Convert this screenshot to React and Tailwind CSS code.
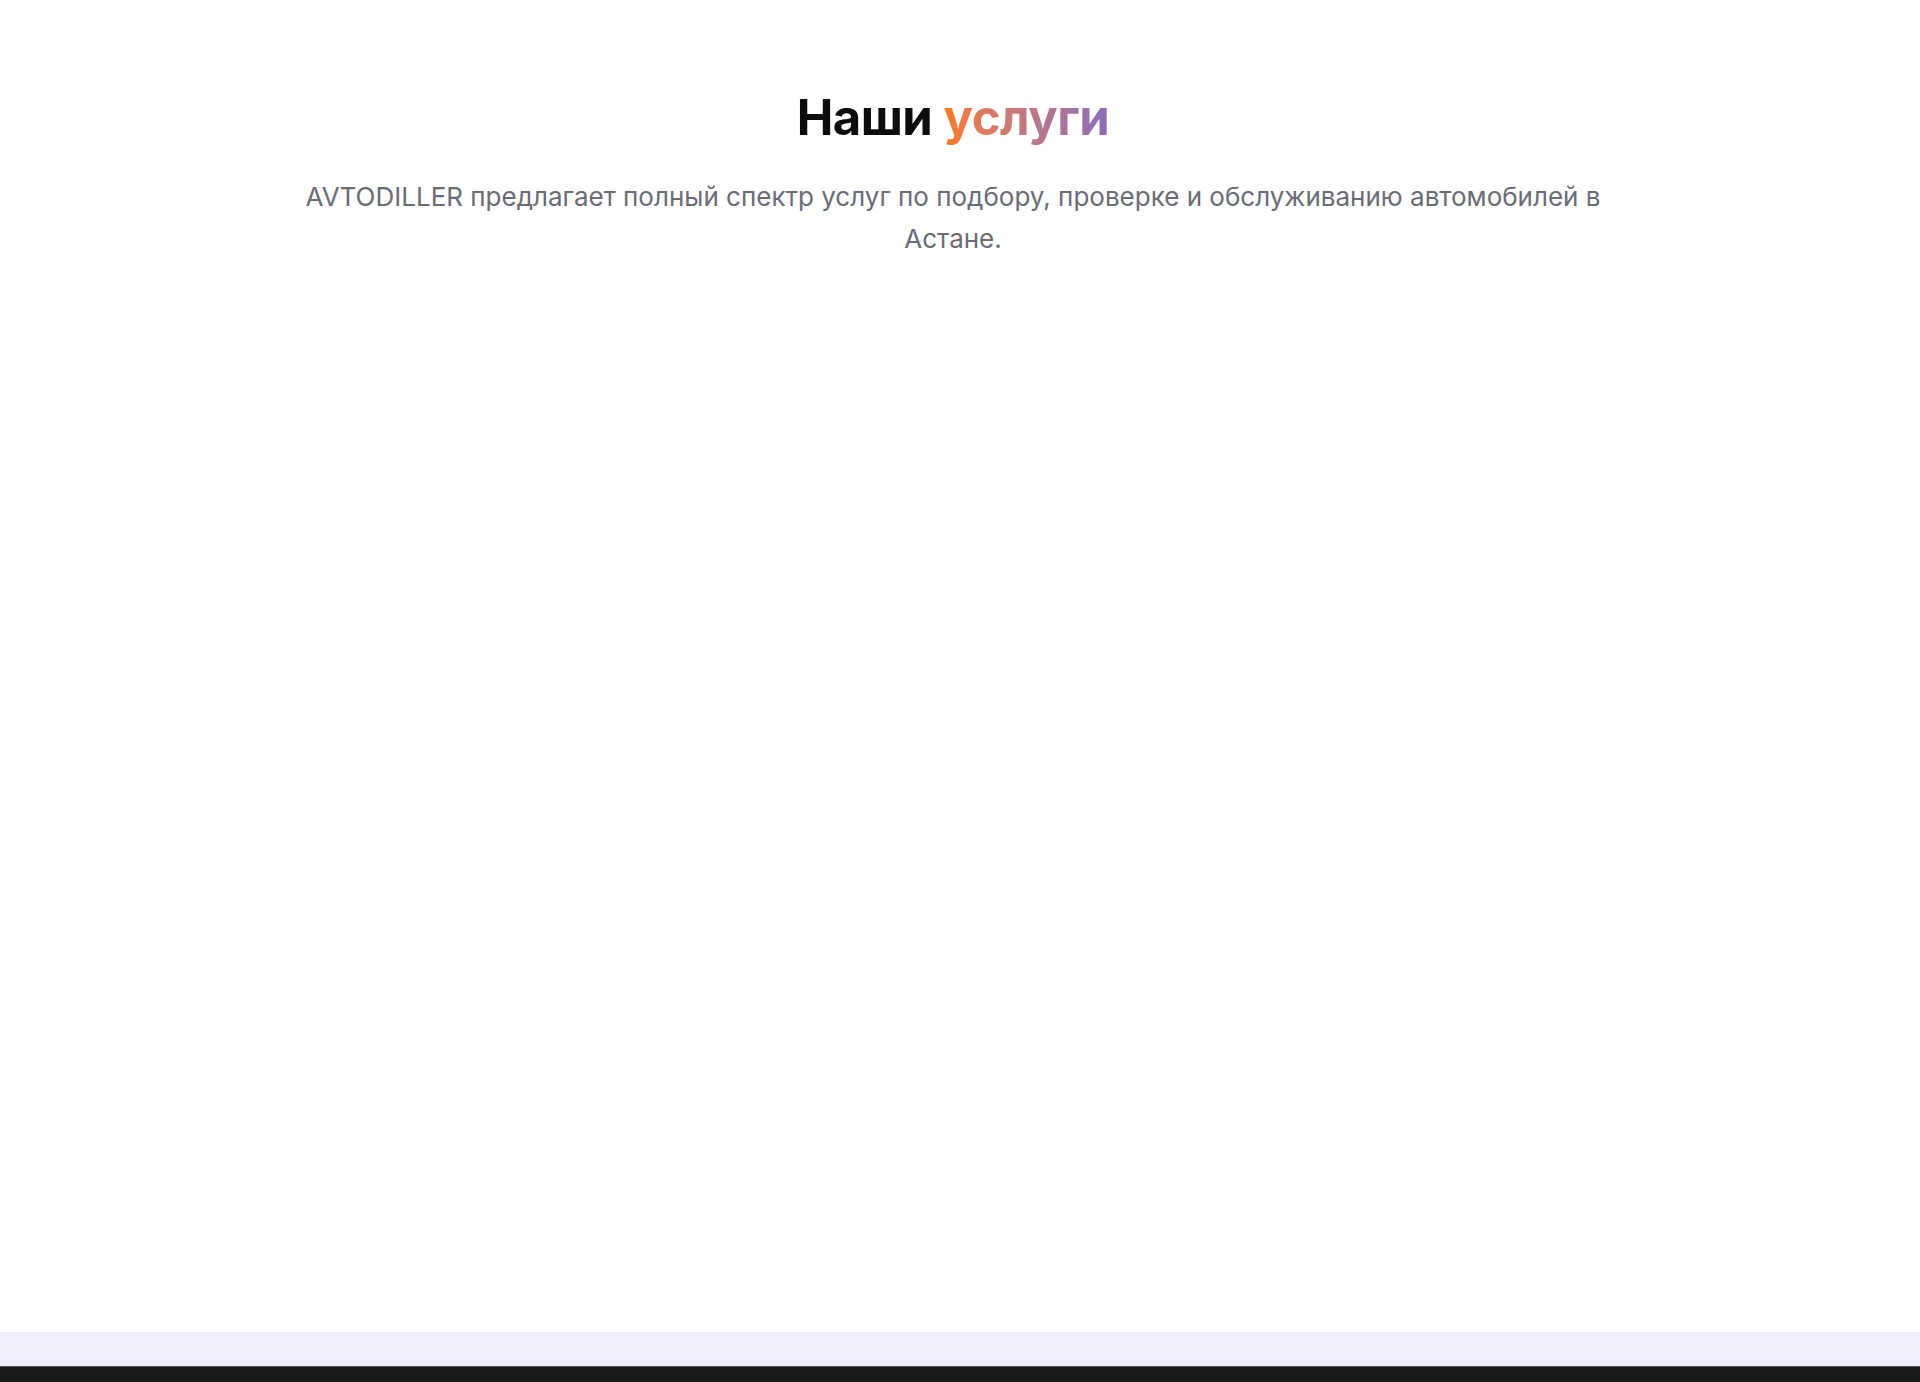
export default function App() {
  return (
    <div className="min-h-[1382px] flex flex-col bg-white" style={{ fontFamily: "Inter, 'Noto Sans', sans-serif" }}>
      <section className="flex-1 flex flex-col items-center pt-[88px] pr-[14px]">
        <h2 className="text-[49px] leading-[60px] font-bold tracking-[-0.01em] text-[#0c0c0e]">
          Наши{" "}
          <span className="bg-gradient-to-r from-[#f97a22] to-[#8a6bb8] bg-clip-text text-transparent">услуги</span>
        </h2>
        <p className="mt-[28px] max-w-[1330px] text-center text-[26px] leading-[42px] text-[#6b6b76]">
          AVTODILLER предлагает полный спектр услуг по подбору, проверке и обслуживанию автомобилей в Астане.
        </p>
      </section>
      <div className="h-[34px] bg-[#efedfb]" />
      <div className="h-[16px] bg-[#18181b] border-t border-[#55555a]" />
    </div>
  );
}
